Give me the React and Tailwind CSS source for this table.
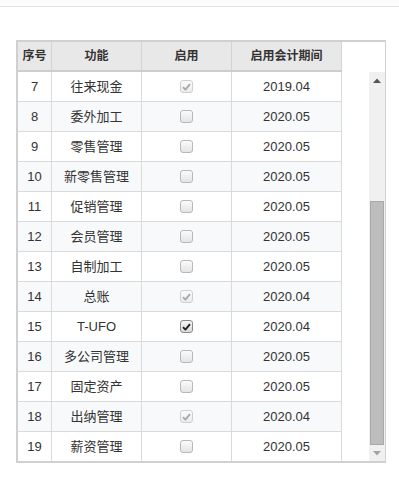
import React from "react";

const rows = [
  [7, "往来现金", "dis", "2019.04"],
  [8, "委外加工", "off", "2020.05"],
  [9, "零售管理", "off", "2020.05"],
  [10, "新零售管理", "off", "2020.05"],
  [11, "促销管理", "off", "2020.05"],
  [12, "会员管理", "off", "2020.05"],
  [13, "自制加工", "off", "2020.05"],
  [14, "总账", "dis", "2020.04"],
  [15, "T-UFO", "on", "2020.04"],
  [16, "多公司管理", "off", "2020.05"],
  [17, "固定资产", "off", "2020.05"],
  [18, "出纳管理", "dis", "2020.04"],
  [19, "薪资管理", "off", "2020.05"],
];

function Check({ state }) {
  if (state === "off") {
    return (
      <div className="w-[13px] h-[13px] rounded-[3px] border border-[#b8b8b8] bg-gradient-to-b from-[#fbfbfb] to-[#e4e4e4]" />
    );
  }
  const on = state === "on";
  return (
    <div
      className={
        on
          ? "w-[13px] h-[13px] rounded-[3px] border border-[#8a8a8a] bg-gradient-to-b from-[#f6f6f6] to-[#dcdcdc] flex items-center justify-center"
          : "w-[13px] h-[13px] rounded-[3px] border border-[#cfcfcf] bg-gradient-to-b from-[#fbfbfb] to-[#ececec] flex items-center justify-center"
      }
    >
      <svg width="9" height="8" viewBox="0 0 9 8">
        <path
          d="M1 4.2 L3.4 6.6 L8 1.2"
          fill="none"
          stroke={on ? "#222" : "#a9a9a9"}
          strokeWidth="1.9"
          strokeLinejoin="round"
        />
      </svg>
    </div>
  );
}

export default function App() {
  const font = { fontFamily: "'Liberation Sans', 'Noto Sans CJK SC', sans-serif" };
  return (
    <div className="w-[399px] h-[498px] bg-white overflow-hidden" style={font}>
      <div className="h-[7px] bg-[#fcfcfc] border-b border-[#e3e3e3]" />
      <div className="mt-[33px] ml-[16px] w-[370px] border-t-2 border-l-2 border-b-2 border-r border-[#d0d0d0] flex">
        <div className="w-[324px] flex flex-col">
          <div className="h-[30px] bg-[#e8e8e8] border-b-2 border-[#cdcdcd] flex text-[12px] font-bold text-[#333]">
            <div className="w-[34px] border-r border-[#d4d4d4] flex items-center justify-center">序号</div>
            <div className="w-[90px] border-r border-[#d4d4d4] flex items-center justify-center">功能</div>
            <div className="w-[90px] border-r border-[#d4d4d4] flex items-center justify-center">启用</div>
            <div className="w-[110px] border-r border-[#d4d4d4] flex items-center justify-center">启用会计期间</div>
          </div>
          {rows.map(([n, name, st, per], i) => {
            const last = i === rows.length - 1;
            const bg = i % 2 === 1 ? "bg-[#f8f9fb]" : "bg-white";
            return (
              <div
                key={n}
                className={
                  (last ? "h-[29px] " : "h-[30px] border-b border-[#dadada] ") +
                  bg +
                  " flex text-[13px] text-[#333]"
                }
              >
                <div className="w-[34px] border-r border-[#dadada] flex items-center justify-center">{n}</div>
                <div className="w-[90px] border-r border-[#dadada] flex items-center justify-center">{name}</div>
                <div className="w-[90px] border-r border-[#dadada] flex items-center justify-center">
                  <Check state={st} />
                </div>
                <div className="w-[110px] border-r border-[#dadada] flex items-center justify-center">{per}</div>
              </div>
            );
          })}
        </div>
        <div className="w-[43px] flex flex-col">
          <div className="h-[30px] bg-white" />
          <div className="flex-1 flex">
            <div className="w-[27px] bg-white" />
            <div className="w-[16px] bg-[#f0f0f0] flex flex-col">
              <div className="h-[17px] flex items-center justify-center">
                <svg width="8" height="5" viewBox="0 0 8 5">
                  <path d="M0 5 L4 0.5 L8 5 Z" fill="#555" />
                </svg>
              </div>
              <div className="flex-1 flex flex-col justify-end px-px">
                <div className="h-[244px] bg-[#bdbdbd] border border-[#a9a9a9]" />
              </div>
              <div className="h-[16px] flex items-center justify-center">
                <svg width="8" height="5" viewBox="0 0 8 5">
                  <path d="M0 0 L8 0 L4 4.5 Z" fill="#a3a3a3" />
                </svg>
              </div>
            </div>
          </div>
        </div>
      </div>
    </div>
  );
}
